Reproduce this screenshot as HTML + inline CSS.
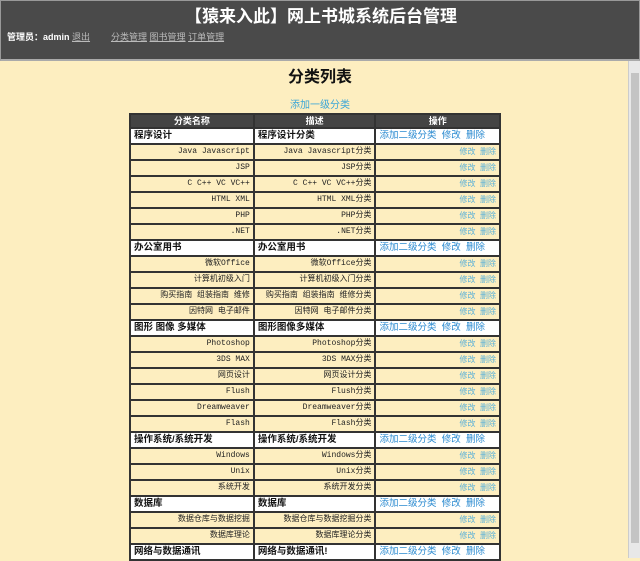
<!DOCTYPE html>
<html><head><meta charset="utf-8"><style>
*{margin:0;padding:0;box-sizing:border-box}
body{width:640px;height:558px;overflow:hidden;background:#fdeec0;font-family:"Liberation Sans","Noto Sans CJK SC",sans-serif;position:relative}
#hd{position:absolute;left:0;top:0;width:640px;height:61px;background:#4a4a4a;border:1px solid #999;border-bottom:2px solid #aaa}
#hd h1{position:absolute;left:0;width:640px;top:1px;text-align:center;color:#fff;font-size:17px;font-weight:bold}
#adm{position:absolute;left:6px;top:29px;font-size:9px;color:#fff;font-weight:bold}
#adm a,#nav a{color:#bbb;font-weight:normal;text-decoration:underline}
#nav{position:absolute;left:110px;top:29px;font-size:9px}
#sb{position:absolute;left:628px;top:61px;width:12px;height:497px;background:#e8e8e8;border-left:1px solid #ccc}
#sb .th{position:absolute;left:2px;top:12px;width:8px;height:470px;background:#c4c4c4}
#t1{position:absolute;left:0;width:640px;top:63px;text-align:center;font-size:16px;font-weight:bold;color:#111}
#add{position:absolute;left:0;width:640px;top:96px;text-align:center;font-size:10px;color:#3aa6d8}
table{position:absolute;left:129px;top:113px;border-collapse:collapse;width:372px;font-family:"Liberation Mono","Noto Sans CJK SC",monospace}
td,th{border:2px solid #333;height:16px;padding:0 3px;font-size:8px;white-space:nowrap;line-height:12px;vertical-align:middle}
th{background:#444;color:#fff;font-size:9px;height:14px;font-family:"Liberation Sans","Noto Sans CJK SC",sans-serif}
tr.c td{background:#fff;font-weight:bold;font-size:9.5px;text-align:left;font-family:"Liberation Sans","Noto Sans CJK SC",sans-serif;color:#111}
tr.c td.o{color:#2a8ad0;font-weight:normal}
tr.s td{text-align:right;color:#222}
tr.s td.o{color:#5ab0d8;font-family:"Liberation Sans","Noto Sans CJK SC",sans-serif}
</style></head><body>
<div id="hd"><h1>【猿来入此】网上书城系统后台管理</h1>
<div id="adm">管理员：admin <a>退出</a></div>
<div id="nav"><a>分类管理</a> <a>图书管理</a> <a>订单管理</a></div></div>
<div id="t1">分类列表</div>
<div id="add">添加一级分类</div>
<table>
<colgroup><col style="width:125px"><col style="width:122px"><col style="width:125px"></colgroup>
<tr><th>分类名称</th><th>描述</th><th>操作</th></tr>
<tr class="c"><td>程序设计</td><td>程序设计分类</td><td class="o">添加二级分类&nbsp; 修改&nbsp; 删除</td></tr>
<tr class="s"><td>Java Javascript</td><td>Java Javascript分类</td><td class="o">修改&nbsp; 删除</td></tr>
<tr class="s"><td>JSP</td><td>JSP分类</td><td class="o">修改&nbsp; 删除</td></tr>
<tr class="s"><td>C C++ VC VC++</td><td>C C++ VC VC++分类</td><td class="o">修改&nbsp; 删除</td></tr>
<tr class="s"><td>HTML XML</td><td>HTML XML分类</td><td class="o">修改&nbsp; 删除</td></tr>
<tr class="s"><td>PHP</td><td>PHP分类</td><td class="o">修改&nbsp; 删除</td></tr>
<tr class="s"><td>.NET</td><td>.NET分类</td><td class="o">修改&nbsp; 删除</td></tr>
<tr class="c"><td>办公室用书</td><td>办公室用书</td><td class="o">添加二级分类&nbsp; 修改&nbsp; 删除</td></tr>
<tr class="s"><td>微软Office</td><td>微软Office分类</td><td class="o">修改&nbsp; 删除</td></tr>
<tr class="s"><td>计算机初级入门</td><td>计算机初级入门分类</td><td class="o">修改&nbsp; 删除</td></tr>
<tr class="s"><td>购买指南 组装指南 维修</td><td>购买指南 组装指南 维修分类</td><td class="o">修改&nbsp; 删除</td></tr>
<tr class="s"><td>因特网 电子邮件</td><td>因特网 电子邮件分类</td><td class="o">修改&nbsp; 删除</td></tr>
<tr class="c"><td>图形 图像 多媒体</td><td>图形图像多媒体</td><td class="o">添加二级分类&nbsp; 修改&nbsp; 删除</td></tr>
<tr class="s"><td>Photoshop</td><td>Photoshop分类</td><td class="o">修改&nbsp; 删除</td></tr>
<tr class="s"><td>3DS MAX</td><td>3DS MAX分类</td><td class="o">修改&nbsp; 删除</td></tr>
<tr class="s"><td>网页设计</td><td>网页设计分类</td><td class="o">修改&nbsp; 删除</td></tr>
<tr class="s"><td>Flush</td><td>Flush分类</td><td class="o">修改&nbsp; 删除</td></tr>
<tr class="s"><td>Dreamweaver</td><td>Dreamweaver分类</td><td class="o">修改&nbsp; 删除</td></tr>
<tr class="s"><td>Flash</td><td>Flash分类</td><td class="o">修改&nbsp; 删除</td></tr>
<tr class="c"><td>操作系统/系统开发</td><td>操作系统/系统开发</td><td class="o">添加二级分类&nbsp; 修改&nbsp; 删除</td></tr>
<tr class="s"><td>Windows</td><td>Windows分类</td><td class="o">修改&nbsp; 删除</td></tr>
<tr class="s"><td>Unix</td><td>Unix分类</td><td class="o">修改&nbsp; 删除</td></tr>
<tr class="s"><td>系统开发</td><td>系统开发分类</td><td class="o">修改&nbsp; 删除</td></tr>
<tr class="c"><td>数据库</td><td>数据库</td><td class="o">添加二级分类&nbsp; 修改&nbsp; 删除</td></tr>
<tr class="s"><td>数据仓库与数据挖掘</td><td>数据仓库与数据挖掘分类</td><td class="o">修改&nbsp; 删除</td></tr>
<tr class="s"><td>数据库理论</td><td>数据库理论分类</td><td class="o">修改&nbsp; 删除</td></tr>
<tr class="c"><td>网络与数据通讯</td><td>网络与数据通讯!</td><td class="o">添加二级分类&nbsp; 修改&nbsp; 删除</td></tr>
</table>
<div id="sb"><div class="th"></div></div>
</body></html>
